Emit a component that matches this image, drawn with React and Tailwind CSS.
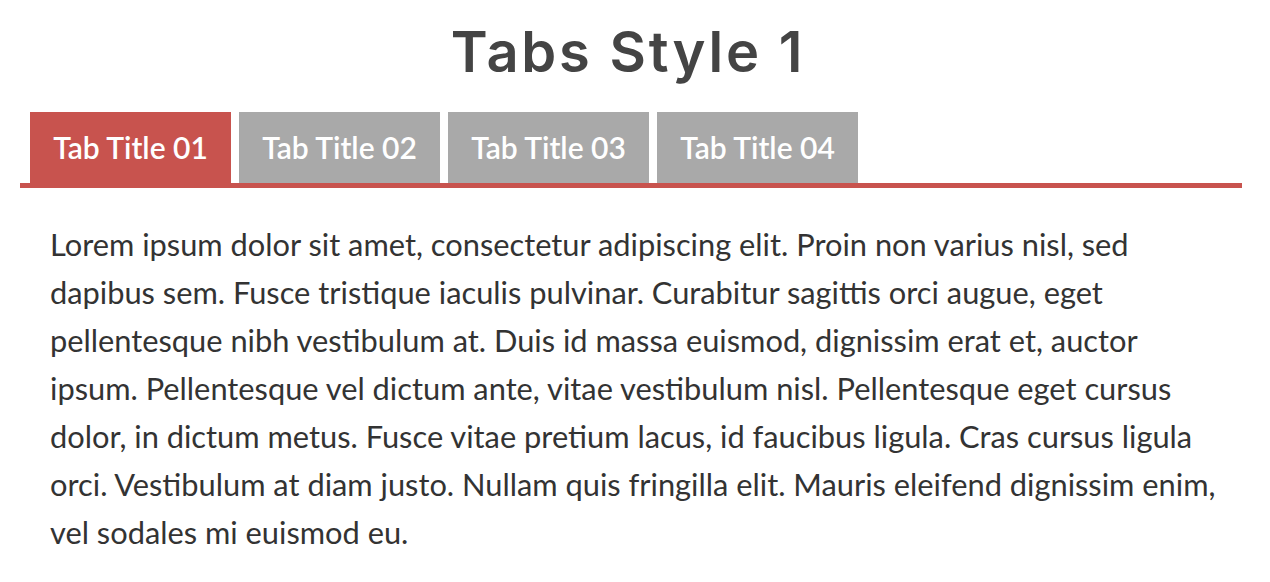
export default function App() {
  const tabs = ["Tab Title 01", "Tab Title 02", "Tab Title 03", "Tab Title 04"];
  const lines = [
    "Lorem ipsum dolor sit amet, consectetur adipiscing elit. Proin non varius nisl, sed",
    "dapibus sem. Fusce tristique iaculis pulvinar. Curabitur sagittis orci augue, eget",
    "pellentesque nibh vestibulum at. Duis id massa euismod, dignissim erat et, auctor",
    "ipsum. Pellentesque vel dictum ante, vitae vestibulum nisl. Pellentesque eget cursus",
    "dolor, in dictum metus. Fusce vitae pretium lacus, id faucibus ligula. Cras cursus ligula",
    "orci. Vestibulum at diam justo. Nullam quis fringilla elit. Mauris eleifend dignissim enim,",
    "vel sodales mi euismod eu.",
  ];
  return (
    <div className="w-[1270px] h-[582px] bg-white overflow-hidden font-['Lato','Noto_Sans',sans-serif]">
      <h1 className="h-[112px] pt-[24px] pr-[14px] text-center text-[56px] leading-none font-semibold tracking-[0.05em] text-[#444444] font-['Inter','Noto_Sans',sans-serif]">
        Tabs Style 1
      </h1>
      <div className="ml-[20px] mr-[28px] flex gap-[8px] border-b-[5px] border-[#c8534e] pl-[10px]">
        {tabs.map((t, i) => (
          <div
            key={t}
            className={
              i === 0
                ? "flex h-[71px] w-[201px] items-center justify-center bg-[#c8534e] text-[30px] font-semibold text-white"
                : "flex h-[71px] w-[201px] items-center justify-center bg-[#a9a9a9] text-[30px] font-semibold text-white"
            }
          >
            {t}
          </div>
        ))}
      </div>
      <p className="pl-[50px] pt-[33px] text-[30.8px] leading-[48px] text-[#333333]">
        {lines.map((l) => (
          <span key={l} className="block whitespace-nowrap">
            {l}
          </span>
        ))}
      </p>
    </div>
  );
}
